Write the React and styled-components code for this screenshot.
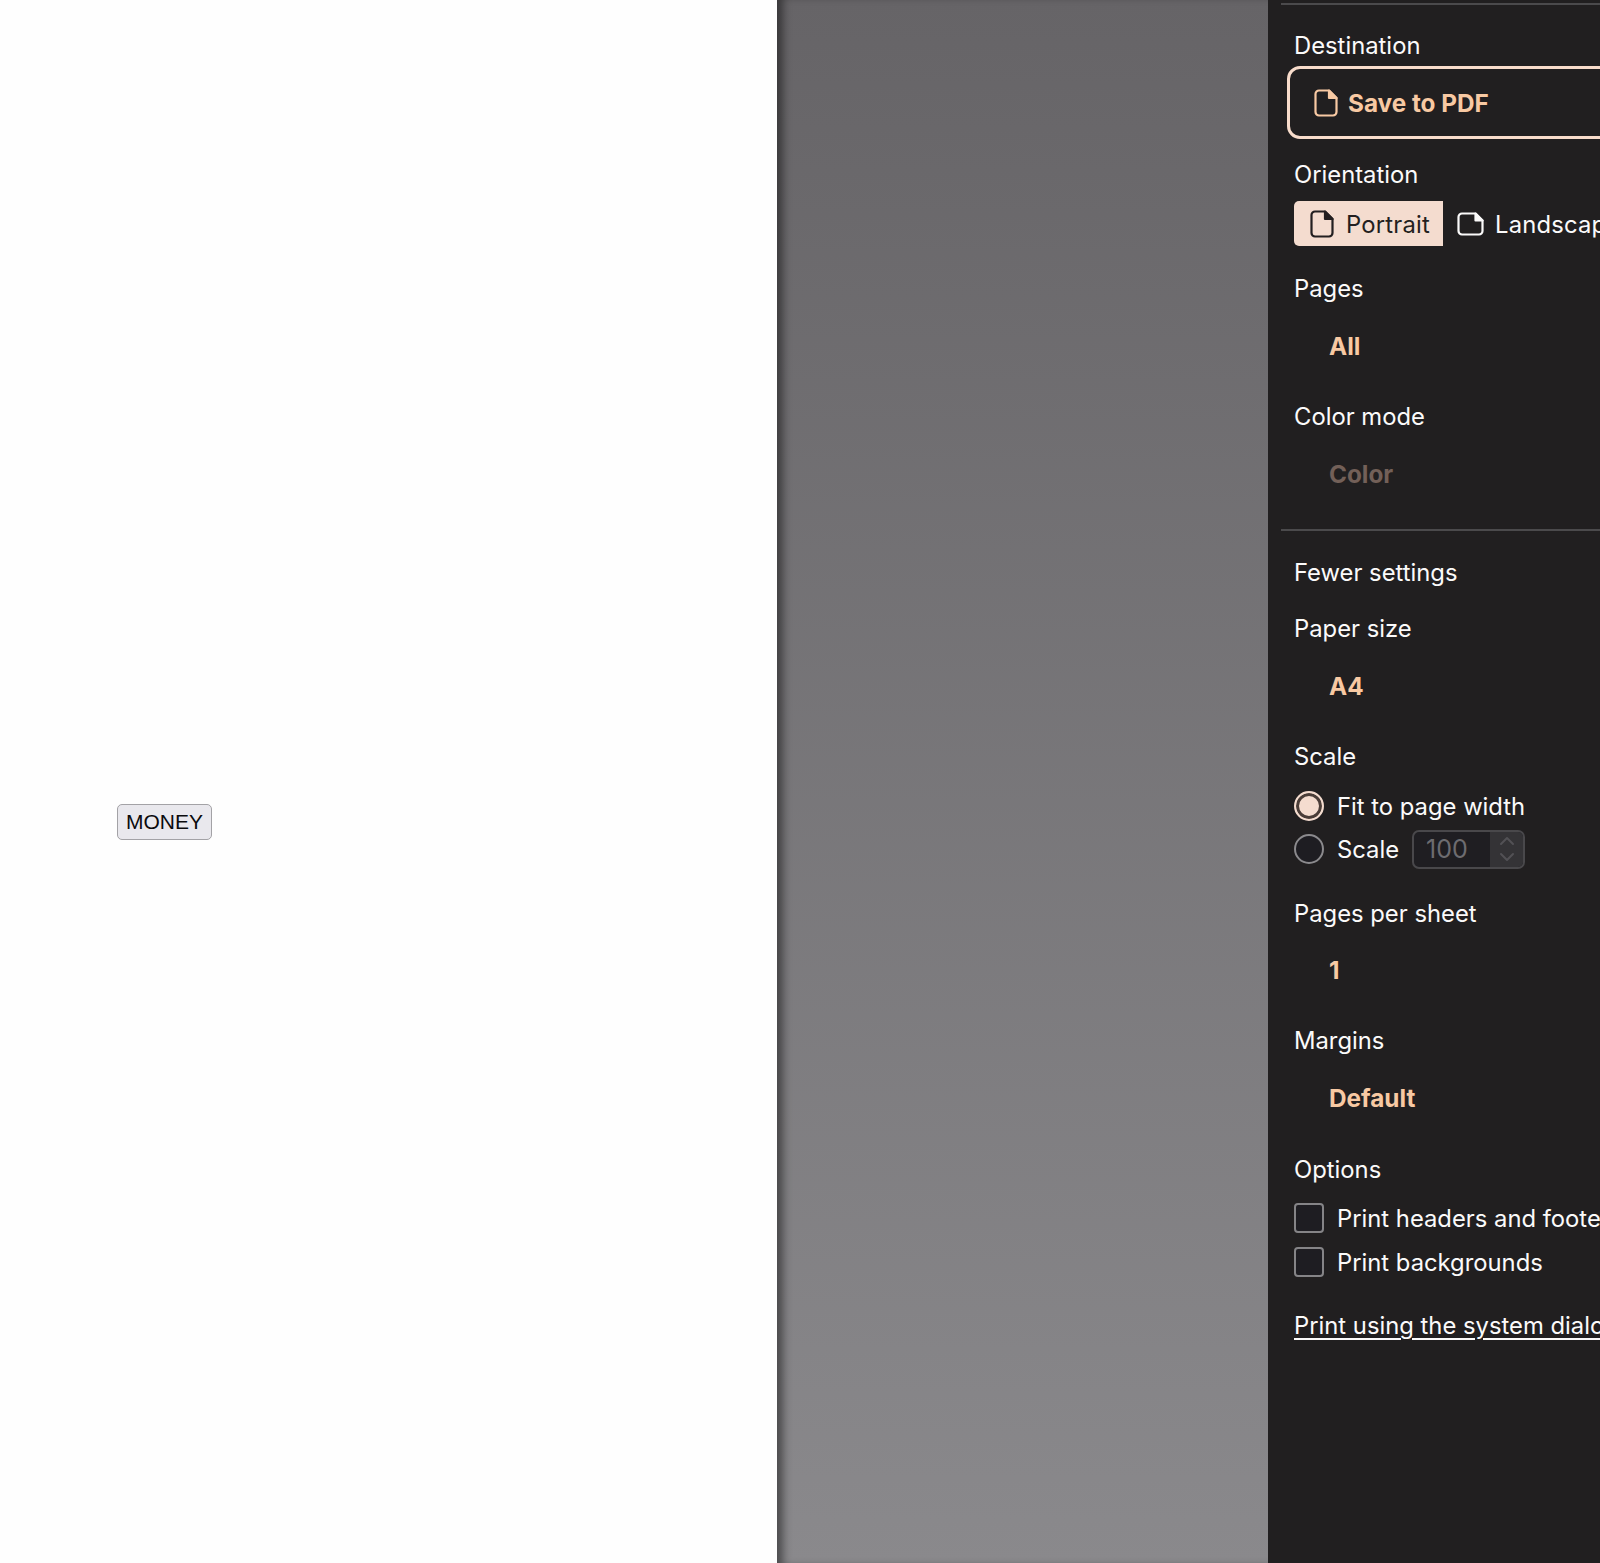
import React from 'react';
import styled, { createGlobalStyle } from 'styled-components';

const GlobalStyle = createGlobalStyle`
  html, body {
    margin: 0;
    padding: 0;
    background: #fff;
  }
  body {
    font-family: Inter, "Liberation Sans", sans-serif;
  }
`;

const Screen = styled.div`
  display: flex;
  width: 1600px;
  height: 1563px;
  overflow: hidden;
`;

const Page = styled.div`
  flex: 0 0 777px;
  box-sizing: border-box;
  padding: 804px 0 0 117px;
  background: #fefefe;
`;

const MoneyButton = styled.button`
  display: block;
  box-sizing: border-box;
  width: 95px;
  height: 36px;
  padding: 0;
  border: 1px solid #a3a2a6;
  border-radius: 5px;
  background: #e9e8ed;
  color: #0b0b0d;
  font-family: "Liberation Sans", Arial, sans-serif;
  font-size: 21px;
`;

const Preview = styled.div`
  flex: 0 0 491px;
  background: linear-gradient(#666467, #8a898c);
  box-shadow: inset 10px 0 8px -4px rgba(0, 0, 0, 0.45);
`;

const Panel = styled.aside`
  flex: 0 0 332px;
  overflow: hidden;
  background: #211f20;
  color: #fbfafa;
  font-size: 23.8px;
  white-space: nowrap;
`;

const Rule = styled.hr`
  width: 400px;
  height: 2px;
  margin: ${(p) => p.$top}px 0 ${(p) => p.$bottom}px 13px;
  border: 0;
  background: #4b4a4c;
`;

const Label = styled.div`
  height: 34px;
  padding-left: 26px;
  line-height: 36px;
  margin-bottom: ${(p) => p.$gap || 0}px;
`;

const DestinationBox = styled.div`
  display: flex;
  align-items: center;
  gap: 10px;
  box-sizing: border-box;
  width: 400px;
  height: 73px;
  margin: 0 0 18px 19px;
  padding: 1px 0 0 24px;
  border: 3px solid #f8dccb;
  border-radius: 13px;
  color: #f8c9a3;
  font-size: 24.3px;
  font-weight: 700;
`;

const Segments = styled.div`
  display: flex;
  height: 45px;
  margin: 0 0 25px 26px;
`;

const Segment = styled.div`
  display: flex;
  flex: none;
  align-items: center;
  box-sizing: border-box;
  gap: ${(p) => (p.$active ? 12 : 11)}px;
  width: ${(p) => (p.$active ? 149 : 200)}px;
  padding: 1px 0 0 ${(p) => (p.$active ? 16 : 14)}px;
  border-radius: 5px 0 0 5px;
  background: ${(p) => (p.$active ? '#f4dccf' : 'transparent')};
  color: ${(p) => (p.$active ? '#231f20' : 'inherit')};
  letter-spacing: 0.2px;
`;

const Select = styled.div`
  height: ${(p) => p.$height || 82}px;
  padding-left: 61px;
  margin-bottom: 12px;
  line-height: ${(p) => p.$height || 82}px;
  font-size: 24.3px;
  font-weight: 700;
  color: ${(p) => (p.$disabled ? '#736058' : '#f8c9a3')};
`;

const Settings = styled.div`
  height: 34px;
  padding-left: 26px;
  line-height: 34px;
  margin-bottom: 21px;
`;

const OptionRow = styled.div`
  display: flex;
  align-items: center;
  gap: 13px;
  height: 30px;
  margin: 0 0 ${(p) => p.$gap || 0}px 26px;
`;

const Radio = styled.span`
  flex: none;
  box-sizing: border-box;
  width: 30px;
  height: 30px;
  border: 2px solid ${(p) => (p.$checked ? '#f4dccf' : '#8b8a8d')};
  border-radius: 50%;
  background: ${(p) => (p.$checked ? '#f4dccf' : '#1e1d22')};
  box-shadow: ${(p) => (p.$checked ? 'inset 0 0 0 3px #4a3d38' : 'none')};
`;

const Checkbox = styled.span`
  flex: none;
  box-sizing: border-box;
  width: 30px;
  height: 30px;
  border: 2px solid #858487;
  border-radius: 4px;
  background: #1e1d22;
`;

const NumberField = styled.div`
  display: flex;
  box-sizing: border-box;
  width: 113px;
  height: 39px;
  border: 2px solid #49484b;
  border-radius: 7px;
  background: #1f1e22;
  color: #6d6c70;
  overflow: hidden;
`;

const NumberValue = styled.span`
  flex: 1;
  padding-left: 12px;
  line-height: 35px;
  font-size: 25px;
`;

const Spinner = styled.span`
  display: flex;
  flex: 0 0 33px;
  align-items: center;
  justify-content: center;
  background: #343336;
`;

const SystemLink = styled.a`
  display: block;
  margin: 32px 0 0 26px;
  color: inherit;
  line-height: 34px;
  text-decoration: underline;
  text-underline-offset: 4px;
  text-decoration-thickness: 2px;
`;

function PortraitIcon() {
  return (
    <svg width="24" height="28" viewBox="0 0 24 28" fill="none" stroke="currentColor" strokeWidth="2.2" strokeLinejoin="round">
      <path d="M5 1.500h10l7.500 7.500v14a3.500 3.500 0 0 1-3.500 3.500H5A3.500 3.500 0 0 1 1.500 23V5A3.500 3.500 0 0 1 5 1.500z" />
      <path d="M15 1.500l7.500 7.500H15z" fill="currentColor" />
    </svg>
  );
}

function LandscapeIcon() {
  return (
    <svg width="27" height="24" viewBox="0 0 27 24" fill="none" stroke="currentColor" strokeWidth="2.2" strokeLinejoin="round">
      <path d="M5 1.500h13.500l7 7V19a3.500 3.500 0 0 1-3.500 3.500H5A3.500 3.500 0 0 1 1.500 19V5A3.500 3.500 0 0 1 5 1.500z" />
      <path d="M18.500 1.500l7 7h-7z" fill="currentColor" />
    </svg>
  );
}

function SpinnerArrows() {
  return (
    <svg width="16" height="28" viewBox="0 0 16 28" fill="none" stroke="#525155" strokeWidth="2" strokeLinecap="round" strokeLinejoin="round">
      <path d="M2 9l6-6 6 6" />
      <path d="M2 19l6 6 6-6" />
    </svg>
  );
}

export default function App() {
  return (
    <>
      <GlobalStyle />
      <Screen>
        <Page>
          <MoneyButton>MONEY</MoneyButton>
        </Page>
        <Preview />
        <Panel>
          <Rule $top={3} $bottom={23} />
          <Label $gap={4}>Destination</Label>
          <DestinationBox>
            <PortraitIcon />
            Save to PDF
          </DestinationBox>
          <Label $gap={10}>Orientation</Label>
          <Segments>
            <Segment $active>
              <PortraitIcon />
              Portrait
            </Segment>
            <Segment>
              <LandscapeIcon />
              Landscape
            </Segment>
          </Segments>
          <Label>Pages</Label>
          <Select>All</Select>
          <Label>Color mode</Label>
          <Select $disabled>Color</Select>
          <Rule $top={14} $bottom={25} />
          <Settings>Fewer settings</Settings>
          <Label>Paper size</Label>
          <Select>A4</Select>
          <Label $gap={18}>Scale</Label>
          <OptionRow $gap={13}>
            <Radio $checked />
            Fit to page width
          </OptionRow>
          <OptionRow $gap={32}>
            <Radio />
            Scale
            <NumberField>
              <NumberValue>100</NumberValue>
              <Spinner>
                <SpinnerArrows />
              </Spinner>
            </NumberField>
          </OptionRow>
          <Label>Pages per sheet</Label>
          <Select $height={81}>1</Select>
          <Label>Margins</Label>
          <Select $height={83}>Default</Select>
          <Label $gap={17}>Options</Label>
          <OptionRow $gap={14}>
            <Checkbox />
            Print headers and footers
          </OptionRow>
          <OptionRow>
            <Checkbox />
            Print backgrounds
          </OptionRow>
          <SystemLink href="#">Print using the system dialog…</SystemLink>
        </Panel>
      </Screen>
    </>
  );
}
